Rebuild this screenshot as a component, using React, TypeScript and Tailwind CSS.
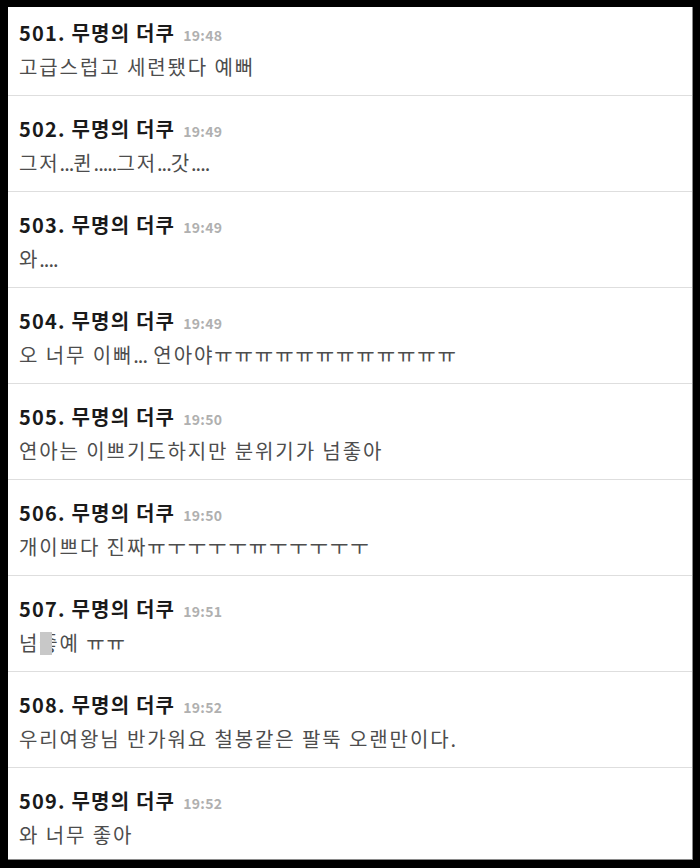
import React from "react";

function Dots({ text }: { text: string }) {
  const parts = text.split(/(\.+)/);
  return (
    <>
      {parts.map((p, i) =>
        p.startsWith(".") ? (
          <span key={i} className="tracking-[-1px]">
            {p}
          </span>
        ) : (
          <React.Fragment key={i}>{p}</React.Fragment>
        )
      )}
    </>
  );
}

const rows: { n: number; time: string; body: React.ReactNode }[] = [
  { n: 501, time: "19:48", body: "고급스럽고 세련됐다 예뻐" },
  { n: 502, time: "19:49", body: <Dots text="그저...퀸.....그저...갓...." /> },
  { n: 503, time: "19:49", body: <Dots text="와...." /> },
  { n: 504, time: "19:49", body: <Dots text="오 너무 이뻐... 연아야ㅠㅠㅠㅠㅠㅠㅠㅠㅠㅠㅠㅠ" /> },
  { n: 505, time: "19:50", body: "연아는 이쁘기도하지만 분위기가 넘좋아" },
  { n: 506, time: "19:50", body: "개이쁘다 진짜ㅠㅜㅜㅜㅜㅠㅜㅜㅜㅜㅜ" },
  {
    n: 507,
    time: "19:51",
    body: (
      <span className="relative inline-block">
        넘좋예 ㅠㅠ
        <span className="absolute left-[21px] top-[2px] h-[23px] w-[12px] bg-[#c8c8c8]" />
      </span>
    ),
  },
  { n: 508, time: "19:52", body: <Dots text="우리여왕님 반가워요 철봉같은 팔뚝 오랜만이다." /> },
  { n: 509, time: "19:52", body: "와 너무 좋아" },
];

export default function App() {
  return (
    <div
      className="w-[700px] h-[868px] bg-black pt-[7px] pl-[8px] pr-[7px] pb-[8px] overflow-hidden"
      style={{ fontFamily: '"Noto Sans CJK KR", "Noto Sans", sans-serif' }}
    >
      <div className="h-full w-full bg-white overflow-hidden border-r border-b border-[#8a8a8a]">
        <div className="-mt-[7px]">
          {rows.map((r) => (
            <div key={r.n} className="h-[96px] border-b border-[#dedede] pl-[11px] pt-[20px]">
              <div className="flex items-baseline gap-[8px] leading-[26px]">
                <span className="text-[20px] font-bold text-[#1a1a1a] tracking-[1.2px]">
                  {r.n}. 무명의 더쿠
                </span>
                <span className="text-[14px] font-bold text-[#b0b0b0] tracking-[0.3px]">{r.time}</span>
              </div>
              <div className="mt-[6px] text-[20px] leading-[26px] text-[#4d4d4d] tracking-[1.9px]">{r.body}</div>
            </div>
          ))}
        </div>
      </div>
    </div>
  );
}
